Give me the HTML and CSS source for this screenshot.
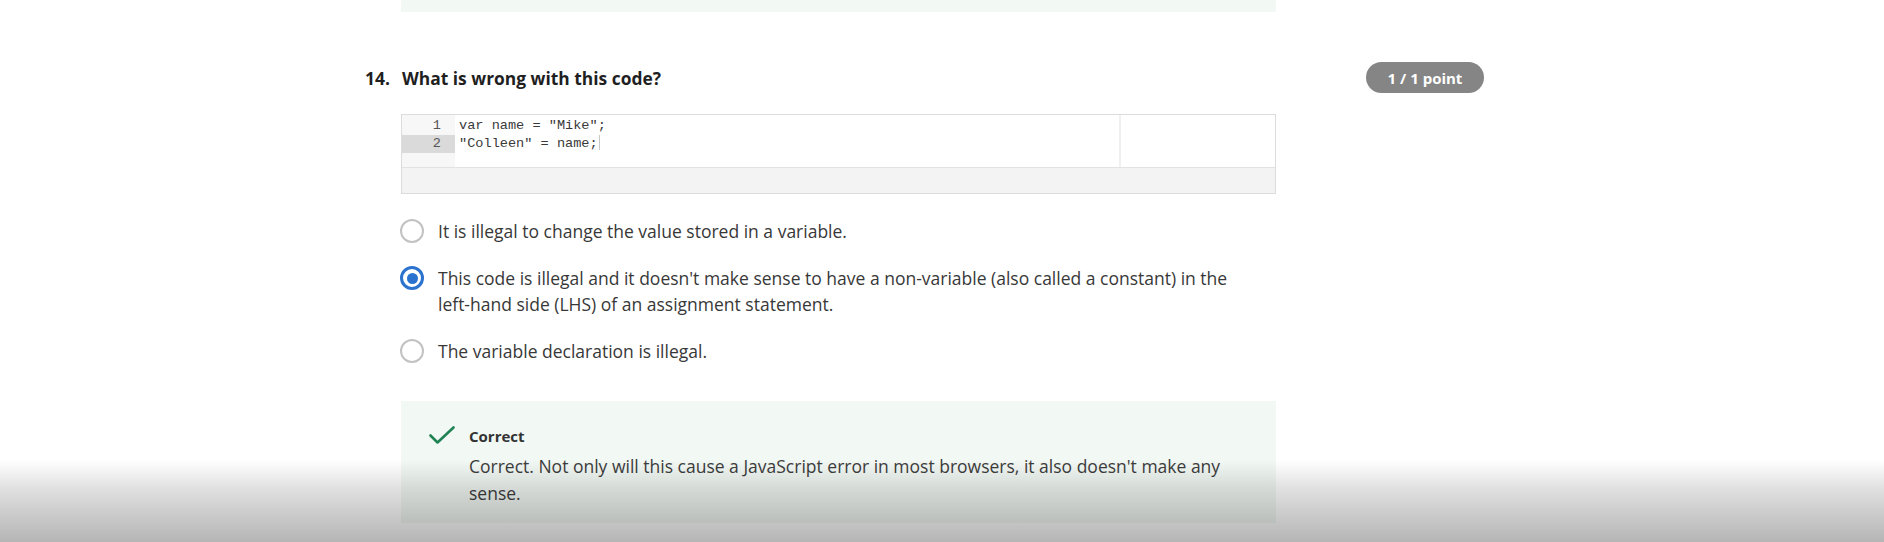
FILE: index.html
```html
<!DOCTYPE html>
<html lang="en">
<head>
<meta charset="utf-8">
<title>Quiz question 14</title>
<link rel="stylesheet" href="styles.css">
</head>
<body>
<div class="quiz">
  <div class="prev-feedback"></div>

  <section class="question">
    <header class="q-header">
      <span class="q-num">14.</span>
      <h2 class="q-title">What is wrong with this code?</h2>
      <span class="badge">1 / 1 point</span>
    </header>

    <div class="q-body">
      <div class="code-box">
        <div class="code-main">
          <div class="gutter">
            <div class="ln">1</div>
            <div class="ln active">2</div>
          </div>
          <div class="code">
            <div class="cl">var name = "Mike";</div>
            <div class="cl">"Colleen" = name;<span class="cursor"></span></div>
          </div>
          <div class="code-side"></div>
        </div>
        <div class="code-foot"></div>
      </div>

      <ul class="options">
        <li class="option">
          <span class="radio"></span>
          <span class="opt-text">It is illegal to change the value stored in a variable.</span>
        </li>
        <li class="option">
          <span class="radio checked"></span>
          <span class="opt-text">This code is illegal and it doesn't make sense to have a non-variable (also called a constant) in the left-hand side (LHS) of an assignment statement.</span>
        </li>
        <li class="option">
          <span class="radio"></span>
          <span class="opt-text">The variable declaration is illegal.</span>
        </li>
      </ul>

      <div class="feedback">
        <svg class="check" width="26" height="19" viewBox="0 0 26 19" aria-hidden="true">
          <polyline points="1.5,9.5 8.5,16.5 24.5,1.5" fill="none" stroke="#1f8354" stroke-width="2.6" stroke-linecap="round" stroke-linejoin="round"/>
        </svg>
        <div class="fb-content">
          <div class="fb-label">Correct</div>
          <p class="fb-text">Correct. Not only will this cause a JavaScript error in most browsers, it also doesn't make any sense.</p>
        </div>
      </div>
    </div>
  </section>
</div>
<div class="shade"></div>
</body>
</html>
```

FILE: styles.css
```css
html, body {
  margin: 0;
  padding: 0;
}

body {
  width: 1884px;
  height: 542px;
  overflow: hidden;
  position: relative;
  background: #ffffff;
  font-family: "Open Sans", "Noto Sans", sans-serif;
  color: #333333;
}

.quiz {
  margin-left: 365px;
  width: 1119px;
}

.prev-feedback {
  margin-left: 36px;
  width: 875px;
  height: 12px;
  background: #f2f8f4;
}

.question {
  margin-top: 50px;
}

.q-header {
  display: flex;
  align-items: center;
  height: 31px;
}

.q-num {
  width: 37px;
  font-size: 17.5px;
  font-weight: 700;
  color: #1f1f1f;
}

.q-title {
  margin: 0;
  font-size: 17.4px;
  font-weight: 700;
  color: #1f1f1f;
  line-height: 24px;
}

.badge {
  margin-left: auto;
  width: 118px;
  height: 31px;
  border-radius: 16px;
  background: #858585;
  color: #ffffff;
  font-size: 15px;
  font-weight: 700;
  display: flex;
  align-items: center;
  justify-content: center;
}

.q-body {
  margin-left: 36px;
  width: 875px;
}

/* code editor */
.code-box {
  margin-top: 21px;
  border: 1px solid #dcdcdc;
  background: #ffffff;
}

.code-main {
  display: flex;
  height: 52px;
}

.gutter {
  width: 53px;
  background: #f7f7f7;
  padding-top: 2px;
}

.ln {
  height: 18px;
  line-height: 18px;
  text-align: right;
  padding-right: 14px;
  font-family: "Liberation Mono", "DejaVu Sans Mono", monospace;
  font-size: 13.6px;
  color: #555555;
}

.ln.active {
  background: #dadada;
}

.code {
  flex: 1;
  padding-top: 2px;
  padding-left: 4px;
}

.cl {
  height: 18px;
  line-height: 18px;
  font-family: "Liberation Mono", "DejaVu Sans Mono", monospace;
  font-size: 13.6px;
  color: #3a3a3a;
  white-space: pre;
}

.cursor {
  display: inline-block;
  width: 1px;
  height: 15px;
  margin-left: 1px;
  vertical-align: -3px;
  background: #c8c8c8;
}

.code-side {
  width: 154px;
  border-left: 2px solid #f0f0f0;
}

.code-foot {
  height: 25px;
  border-top: 1px solid #e2e2e2;
  background: #f3f3f3;
}

/* options */
.options {
  list-style: none;
  margin: 24px 0 0;
  padding: 0 40px 0 0;
  display: flex;
  flex-direction: column;
  gap: 21px;
}

.option {
  display: flex;
  align-items: flex-start;
  gap: 14px;
  font-size: 17.5px;
  line-height: 26px;
  color: #383838;
}

.radio {
  flex: none;
  width: 24px;
  height: 24px;
  margin-top: 1px;
  margin-left: -1px;
  box-sizing: border-box;
  border: 2px solid #c2c2c2;
  border-radius: 50%;
  display: flex;
  align-items: center;
  justify-content: center;
  background: #ffffff;
}

.radio.checked {
  border: 3px solid #2c72cf;
}

.radio.checked::after {
  content: "";
  width: 11px;
  height: 11px;
  border-radius: 50%;
  background: #2c72cf;
}

.opt-text {
  flex: 1;
}

/* feedback */
.feedback {
  margin-top: 37px;
  background: #f2f8f4;
  padding: 24px 30px 16px 28px;
  display: flex;
  gap: 14px;
}

.check {
  flex: none;
  margin-top: 1px;
}

.fb-content {
  flex: 1;
}

.fb-label {
  font-size: 15px;
  font-weight: 700;
  line-height: 22px;
  color: #333333;
}

.fb-text {
  margin: 6px 0 0;
  font-size: 17.5px;
  line-height: 27px;
  color: #3d3d3d;
}

/* bottom video-style shade overlay */
.shade {
  position: absolute;
  left: 0;
  right: 0;
  bottom: 0;
  height: 82px;
  pointer-events: none;
  background: linear-gradient(to bottom, rgba(0, 0, 0, 0) 0%, rgba(0, 0, 0, 0.12) 35%, rgba(0, 0, 0, 0.22) 72%, rgba(0, 0, 0, 0.29) 100%);
}
```
